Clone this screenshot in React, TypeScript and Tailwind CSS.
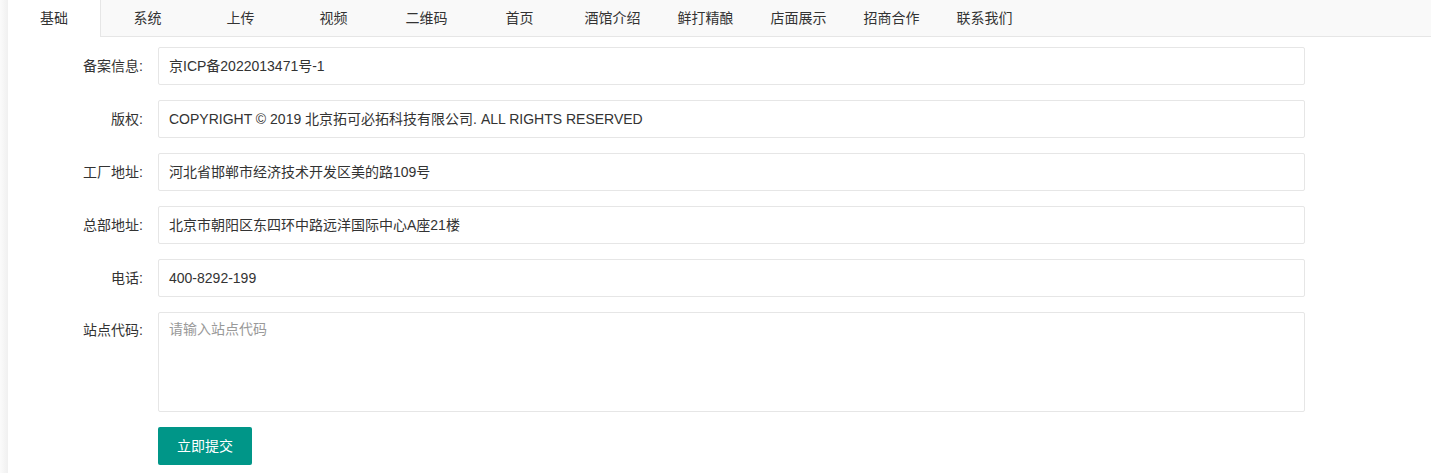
const tabs = ['基础', '系统', '上传', '视频', '二维码', '首页', '酒馆介绍', '鲜打精酿', '店面展示', '招商合作', '联系我们']

const fields = [
  { label: '备案信息', value: '京ICP备2022013471号-1' },
  { label: '版权', value: 'COPYRIGHT © 2019 北京拓可必拓科技有限公司. ALL RIGHTS RESERVED' },
  { label: '工厂地址', value: '河北省邯郸市经济技术开发区美的路109号' },
  { label: '总部地址', value: '北京市朝阳区东四环中路远洋国际中心A座21楼' },
  { label: '电话', value: '400-8292-199' },
]

export default function App() {
  return (
    <div
      className="flex min-h-[473px] bg-white text-[14px] text-[#333]"
      style={{ fontFamily: '"Liberation Sans", "Noto Sans CJK SC", sans-serif' }}
    >
      {/* left shadow strip */}
      <div className="w-[8px] shrink-0 bg-gradient-to-r from-[#fbfbfb] to-[#f0f0f0]" />

      <div className="flex-1">
        {/* Tabs */}
        <div className="flex h-[37px] border-b border-[#e6e6e6] bg-[#f9f9f9]">
          {tabs.map((t, i) => (
            <div
              key={t}
              className={
                i === 0
                  ? 'w-[93px] h-[37px] -mb-px flex items-center justify-center bg-white border-r border-[#e6e6e6] text-[14px] text-[#333]'
                  : 'w-[93px] h-[36px] flex items-center justify-center text-[14px] text-[#333]'
              }
            >
              {t}
            </div>
          ))}
        </div>

        {/* Form */}
        <div className="pt-[10px]">
          {fields.map((f) => (
            <div key={f.label} className="flex mb-[15px]">
              <label className="w-[150px] pr-[15px] h-[38px] flex items-center justify-end text-[14px] text-[#333]">
                {f.label}:
              </label>
              <div className="w-[1147px] h-[38px] flex items-center px-[10px] border border-[#e6e6e6] rounded-[2px] bg-white text-[14px] text-[#333]">
                {f.value}
              </div>
            </div>
          ))}

          <div className="flex mb-[15px]">
            <label className="w-[150px] pr-[15px] pt-[8px] text-right text-[14px] text-[#333]">站点代码:</label>
            <textarea
              placeholder="请输入站点代码"
              className="w-[1147px] h-[100px] resize-none border border-[#e6e6e6] rounded-[2px] px-[10px] py-[6px] text-[14px] text-[#333] placeholder:text-[#999] outline-none"
            />
          </div>

          <div className="flex">
            <div className="w-[150px]" />
            <button className="w-[94px] h-[38px] rounded-[2px] bg-[#009688] text-white text-[14px]">立即提交</button>
          </div>
        </div>
      </div>
    </div>
  )
}
